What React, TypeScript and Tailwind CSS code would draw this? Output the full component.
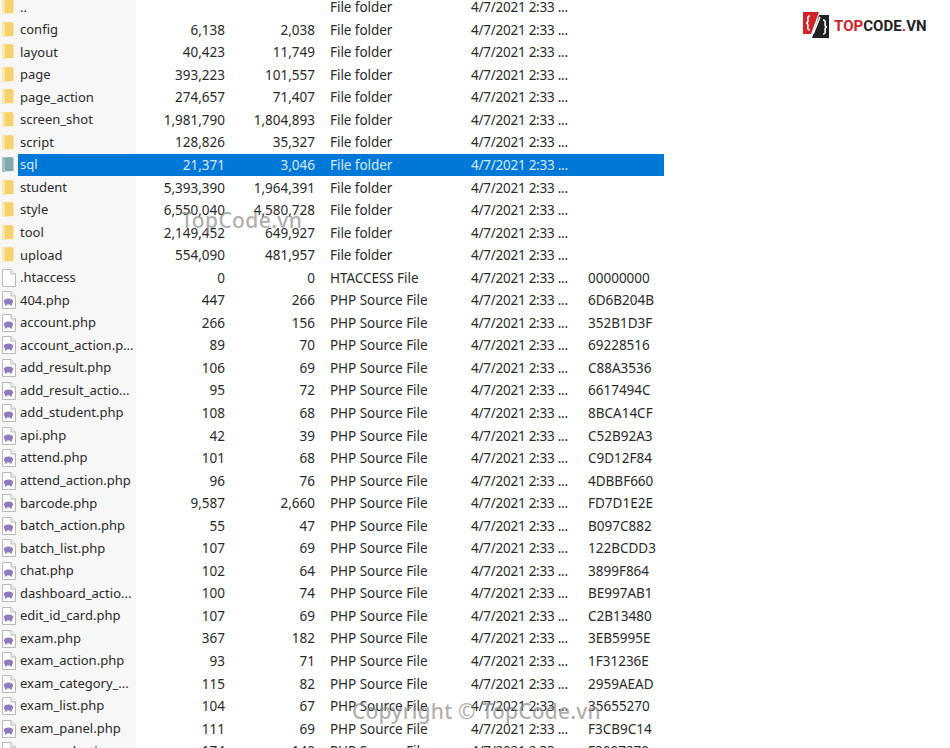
const FILAS = [
  ['..', '', '', 'File folder', '', 'd'],
  ['config', '6,138', '2,038', 'File folder', '', 'd'],
  ['layout', '40,423', '11,749', 'File folder', '', 'd'],
  ['page', '393,223', '101,557', 'File folder', '', 'd'],
  ['page_action', '274,657', '71,407', 'File folder', '', 'd'],
  ['screen_shot', '1,981,790', '1,804,893', 'File folder', '', 'd'],
  ['script', '128,826', '35,327', 'File folder', '', 'd'],
  ['sql', '21,371', '3,046', 'File folder', '', 'd'],
  ['student', '5,393,390', '1,964,391', 'File folder', '', 'd'],
  ['style', '6,550,040', '4,580,728', 'File folder', '', 'd'],
  ['tool', '2,149,452', '649,927', 'File folder', '', 'd'],
  ['upload', '554,090', '481,957', 'File folder', '', 'd'],
  ['.htaccess', '0', '0', 'HTACCESS File', '00000000', 'f'],
  ['404.php', '447', '266', 'PHP Source File', '6D6B204B', 'p'],
  ['account.php', '266', '156', 'PHP Source File', '352B1D3F', 'p'],
  ['account_action.p...', '89', '70', 'PHP Source File', '69228516', 'p'],
  ['add_result.php', '106', '69', 'PHP Source File', 'C88A3536', 'p'],
  ['add_result_actio...', '95', '72', 'PHP Source File', '6617494C', 'p'],
  ['add_student.php', '108', '68', 'PHP Source File', '8BCA14CF', 'p'],
  ['api.php', '42', '39', 'PHP Source File', 'C52B92A3', 'p'],
  ['attend.php', '101', '68', 'PHP Source File', 'C9D12F84', 'p'],
  ['attend_action.php', '96', '76', 'PHP Source File', '4DBBF660', 'p'],
  ['barcode.php', '9,587', '2,660', 'PHP Source File', 'FD7D1E2E', 'p'],
  ['batch_action.php', '55', '47', 'PHP Source File', 'B097C882', 'p'],
  ['batch_list.php', '107', '69', 'PHP Source File', '122BCDD3', 'p'],
  ['chat.php', '102', '64', 'PHP Source File', '3899F864', 'p'],
  ['dashboard_actio...', '100', '74', 'PHP Source File', 'BE997AB1', 'p'],
  ['edit_id_card.php', '107', '69', 'PHP Source File', 'C2B13480', 'p'],
  ['exam.php', '367', '182', 'PHP Source File', '3EB5995E', 'p'],
  ['exam_action.php', '93', '71', 'PHP Source File', '1F31236E', 'p'],
  ['exam_category_...', '115', '82', 'PHP Source File', '2959AEAD', 'p'],
  ['exam_list.php', '104', '67', 'PHP Source File', '35655270', 'p'],
  ['exam_panel.php', '111', '69', 'PHP Source File', 'F3CB9C14', 'p'],
  ['exam_selection...', '174', '140', 'PHP Source File', 'F2007270', 'p'],
]

function IconoCarpeta({ color, claro }: { color: string; claro: string }) {
  return (
    <svg width="14" height="18" viewBox="0 0 14 18" className="shrink-0">
      <path d="M1 1.5 L11 1 L12.5 2.5 L12.5 15 L1 15.5 Z" fill={color} />
      <path d="M1 1.5 L4 3 L4 16.5 L1 15.5 Z" fill={claro} />
    </svg>
  )
}

function IconoArchivo({ php }: { php: boolean }) {
  return (
    <svg width="15" height="18" viewBox="0 0 15 18" className="shrink-0">
      <path d="M1.5 0.5 H10 L14.5 5 V17.5 H1.5 Z" fill="#ffffff" stroke="#b9b9b9" />
      <path d="M10 0.5 V5 H14.5" fill="#f0f0f0" stroke="#b9b9b9" />
      {php && <ellipse cx="7.5" cy="10.5" rx="4.6" ry="3" fill="#9279bd" />}
      {php && <rect x="4" y="11" width="2" height="3.4" fill="#9279bd" />}
      {php && <rect x="9" y="11" width="2" height="3.4" fill="#9279bd" />}
    </svg>
  )
}

function Fila({ fila }: { fila: string[] }) {
  const [nombre, tam, comp, tipo, crc, clase] = fila
  const sel = nombre === 'sql'
  const tono = sel ? 'bg-[#0078d7] text-[#d6ebfa]' : ''
  return (
    <div className="flex h-[22.55px] items-center whitespace-nowrap">
      <div className="flex h-full w-[18px] shrink-0 items-center pl-[1px]">
        {clase === 'd' ? (
          <IconoCarpeta color={sel ? '#7fa9ab' : '#f7d26a'} claro={sel ? '#a4c2c4' : '#fce9ab'} />
        ) : (
          <IconoArchivo php={clase === 'p'} />
        )}
      </div>
      <div className={`flex h-full w-[646px] items-center ${tono}`}>
        <span className="w-[118px] pl-[2px] text-[13px]">{nombre}</span>
        <span className="w-[89px] text-right">{tam}</span>
        <span className="w-[90px] text-right">{comp}</span>
        <span className="ml-[15px] w-[141px] tracking-[-0.05px]">{tipo}</span>
        <span className="w-[117px] tracking-[-0.25px]">4/7/2021 2:33 ...</span>
        <span>{crc}</span>
      </div>
    </div>
  )
}

export default function App() {
  return (
    <div className="relative h-[748px] w-[950px] overflow-hidden bg-white font-['Noto_Sans',sans-serif] text-[13.5px] text-[#2a2a2a]">
      <div className="relative -mt-[4px] w-[950px]">
        <div className="absolute bottom-0 left-0 top-0 w-[136px] bg-[#f7f7f7]" />
        <div className="relative">
          {FILAS.map((fila) => (
            <Fila key={fila[0]} fila={fila} />
          ))}
        </div>
      </div>

      <div className="absolute left-[181px] top-[205px] text-[21px] font-medium tracking-[0.4px] text-[#8c8c8c]/70">TopCode.vn</div>
      <div className="absolute left-[352px] top-[696px] text-[21px] font-medium tracking-[0.2px] text-[#8c8c8c]/70">Copyright © TopCode.vn</div>

      <div className="absolute left-[803px] top-[12px] flex items-center gap-[4px]">
        <svg width="27" height="27" viewBox="0 0 27 27">
          <path d="M0 0 H16 L8 22 H0 Z" fill="#d2232a" />
          <path d="M16 3 H26 V26 H9 Z" fill="#222222" />
          <path d="M7 4 Q4 4 5 8 Q5 11 3 11 Q5 11 5 14 Q4 18 7 18" fill="none" stroke="#ffffff" strokeWidth="1.6" />
          <path d="M20 8 Q23 8 22 12 Q22 15 24 15 Q22 15 22 18 Q23 22 20 22" fill="none" stroke="#ffffff" strokeWidth="1.6" />
          <path d="M17 5 L10 22" fill="none" stroke="#ffffff" strokeWidth="1.6" />
        </svg>
        <span className="pt-[2px] font-['Roboto',sans-serif] text-[15px] font-bold tracking-[0.05px] text-[#222222]">
          <span className="text-[#d2232a]">TOP</span>CODE<span className="text-[#d2232a]">.</span>VN
        </span>
      </div>
    </div>
  )
}
